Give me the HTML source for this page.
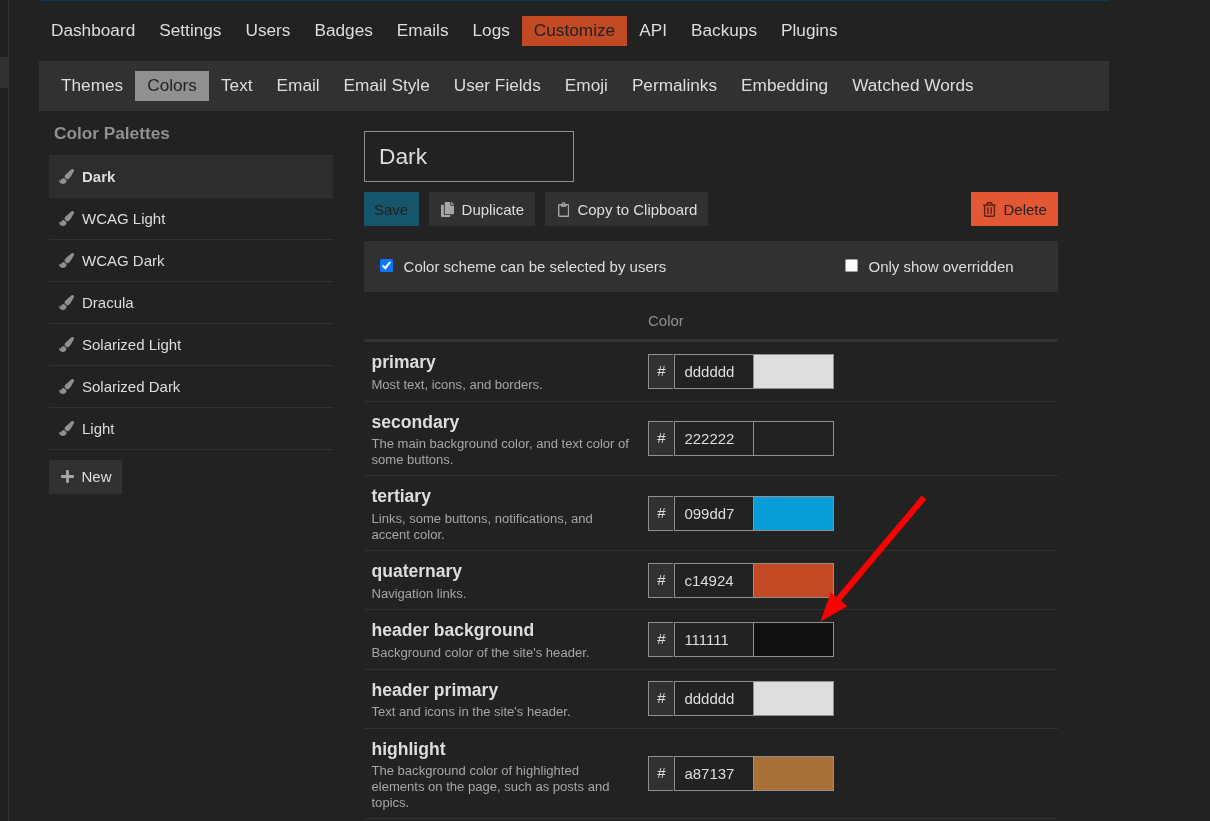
<!DOCTYPE html>
<html><head><meta charset="utf-8">
<style>
*{box-sizing:border-box;margin:0;padding:0}
html,body{width:1210px;height:821px;overflow:hidden;background:#222;color:#ddd;font-family:"Liberation Sans",Arial,sans-serif;font-size:15px}
.abs{position:absolute}
#side{left:0;top:0;width:9px;height:821px;background:#212121;border-right:1px solid #333}
#sideact{left:0;top:57px;width:8px;height:31px;background:#313131}
#topbar{left:39px;top:0;width:1070px;height:1px;background:#043b50}
.nav{position:absolute;display:flex;list-style:none;font-size:17.23px}
.nav li{padding:0 12px;height:30px;line-height:28px;white-space:nowrap}
#nav1{left:39px;top:16px}
#nav1 li.act{background:#c14924;color:#222}
#bar2{left:39px;top:61px;width:1070px;height:50px;background:#313131}
#nav2{left:49px;top:71px}
#nav2 li.act{background:#909090;color:#222}
h3{position:absolute;left:54px;top:123px;font-size:17.23px;color:#909090;font-weight:bold;line-height:20px}
#list{left:49px;top:155px;width:284px;list-style:none}
#list li{height:42px;border-bottom:1px solid #313131;line-height:41px;padding-left:33px;position:relative;font-size:15px}
#list li.act{background:#2d2d2d;font-weight:bold;border-top:1px solid #313131;height:43px}
#list li svg{position:absolute;left:10px;top:12.5px;width:15px;height:15px;fill:#909090}
.btn{position:absolute;height:34px;top:192px;background:#313131;color:#ddd;font-size:15px;line-height:36px;white-space:nowrap}
.btn svg{position:absolute;fill:#a6a6a6}
#name{left:364px;top:131px;width:210px;height:51px;border:1px solid #909090;font-size:22.74px;line-height:49px;padding-left:14px}
#panel{left:364px;top:241px;width:694px;height:51px;background:#313131}
.cb{position:absolute;width:13px;height:13px;border-radius:1.5px}
.lbl{position:absolute;font-size:15px;line-height:18px;white-space:nowrap}
#colh{left:648px;top:312px;color:#909090;font-size:15px;line-height:18px}
#colline{left:364px;top:339px;width:694px;height:3px;background:#313131}
.row{position:absolute;left:364px;width:694px;border-bottom:1px solid #313131}
.row b{position:absolute;left:7.5px;font-size:17.55px;line-height:20px;white-space:nowrap}
.row p{position:absolute;left:7.5px;font-size:13.06px;line-height:16px;color:#a6a6a6;width:261px}
.hex{position:absolute;left:284px;width:186px;height:35px;display:flex}
.hex i{font-style:normal;position:relative;width:26px;border:1px solid #909090;border-right:0;background:#313131;text-align:center;line-height:31px;font-size:15px}
.hex u{text-decoration:none;width:80px;border:1px solid #909090;line-height:33px;padding-left:9.4px;font-size:15px}
.hex i:after{content:"";position:absolute;right:0;top:-1px;bottom:-1px;width:1px;background:#2c2c2c}
.hex s{width:80px;border:1px solid #909090;border-left:0}
#wrap{position:absolute;left:0;top:0;width:1210px;height:821px;will-change:transform}
</style></head><body><div id="wrap">
<div class="abs" id="side"></div><div class="abs" id="sideact"></div>
<div class="abs" id="topbar"></div>
<ul class="nav" id="nav1"><li>Dashboard</li><li>Settings</li><li>Users</li><li>Badges</li><li>Emails</li><li>Logs</li><li class="act">Customize</li><li>API</li><li>Backups</li><li>Plugins</li></ul>
<div class="abs" id="bar2"></div>
<ul class="nav" id="nav2"><li>Themes</li><li class="act">Colors</li><li>Text</li><li>Email</li><li>Email Style</li><li>User Fields</li><li>Emoji</li><li>Permalinks</li><li>Embedding</li><li>Watched Words</li></ul>
<h3>Color Palettes</h3>
<ul class="abs" id="list">
<li class="act"><svg viewBox="0 0 512 512"><use href="#brush"/></svg>Dark</li>
<li><svg viewBox="0 0 512 512"><use href="#brush"/></svg>WCAG Light</li>
<li><svg viewBox="0 0 512 512"><use href="#brush"/></svg>WCAG Dark</li>
<li><svg viewBox="0 0 512 512"><use href="#brush"/></svg>Dracula</li>
<li><svg viewBox="0 0 512 512"><use href="#brush"/></svg>Solarized Light</li>
<li><svg viewBox="0 0 512 512"><use href="#brush"/></svg>Solarized Dark</li>
<li><svg viewBox="0 0 512 512"><use href="#brush"/></svg>Light</li>
</ul>
<svg width="0" height="0" style="position:absolute"><defs>
<path id="brush" d="M167.02 309.34c-40.12 2.58-76.53 17.86-97.19 72.3-2.350 6.210-8 9.980-14.590 9.980-11.110 0-45.460-27.670-55.250-34.350C0 439.620 37.930 512 128 512c75.860 0 128-43.770 128-120.190 0-3.110-.65-6.080-.97-9.130l-88.010-73.340zM457.890 0c-15.160 0-29.370 6.710-40.210 16.450C213.270 199.050 192 203.340 192 257.090c0 13.700 3.250 26.760 8.730 38.700l63.820 53.180c7.210 1.800 14.640 3.030 22.390 3.030 62.110 0 98.110-45.470 211.160-256.460 7.380-14.350 13.900-29.850 13.900-45.990C512 20.640 486 0 457.890 0z"/>
</defs></svg>
<div class="btn" style="left:49px;top:460px;width:73px;padding-left:32.5px;line-height:34px"><svg viewBox="0 0 448 448" style="left:12px;top:10px;width:13px;height:13px"><path d="M416 176H272V32c0-17.670-14.330-32-32-32h-32c-17.670 0-32 14.330-32 32v144H32c-17.670 0-32 14.330-32 32v32c0 17.670 14.330 32 32 32h144v144c0 17.670 14.330 32 32 32h32c17.670 0 32-14.330 32-32V272h144c17.670 0 32-14.330 32-32v-32c0-17.670-14.330-32-32-32z"/></svg>New</div>

<div class="abs" id="name">Dark</div>
<div class="btn" style="left:364px;width:55px;background:#17556b;color:#222;padding-left:10px">Save</div>
<div class="btn" style="left:429px;width:106px;padding-left:32.600px"><svg viewBox="0 0 448 512" style="left:12px;top:10px;width:13px;height:15px"><path d="M320 448v40c0 13-11 24-24 24H24c-13 0-24-11-24-24V120c0-13 11-24 24-24h72v296c0 31 25 56 56 56h168zm0-344V0H152c-13 0-24 11-24 24v368c0 13 11 24 24 24h272c13 0 24-11 24-24V128H344c-13 0-24-11-24-24zm121-31L375 7A24 24 0 0 0 358 0H352v96h96v-6a24 24 0 0 0-7-17z"/></svg>Duplicate</div>
<div class="btn" style="left:545px;width:163px;padding-left:32.400px"><svg viewBox="0 0 384 512" style="left:12.800px;top:10px;width:11.250px;height:15px"><path d="M336 64h-80c0-35-29-64-64-64s-64 29-64 64H48C22 64 0 86 0 112v352c0 26 22 48 48 48h288c26 0 48-22 48-48V112c0-26-22-48-48-48zM192 40c13 0 24 11 24 24s-11 24-24 24-24-11-24-24 11-24 24-24zm144 418c0 3-3 6-6 6H54c-3 0-6-3-6-6V118c0-3 3-6 6-6h42v36c0 7 5 12 12 12h168c7 0 12-5 12-12v-36h42c3 0 6 3 6 6z"/></svg>Copy to Clipboard</div>
<div class="btn" style="left:971px;width:87px;background:#e45735;color:#222;padding-left:32.500px"><svg viewBox="0 0 448 512" style="left:12px;top:10px;width:13px;height:15px;fill:#5a2012"><path d="M268 416h24a12 12 0 0 0 12-12V188a12 12 0 0 0-12-12h-24a12 12 0 0 0-12 12v216a12 12 0 0 0 12 12zM432 80h-82l-34-57A48 48 0 0 0 275 0H173a48 48 0 0 0-41 23L98 80H16A16 16 0 0 0 0 96v16a16 16 0 0 0 16 16h16v336a48 48 0 0 0 48 48h288a48 48 0 0 0 48-48V128h16a16 16 0 0 0 16-16V96a16 16 0 0 0-16-16zM171 51a6 6 0 0 1 5-3h96a6 6 0 0 1 5 3l17 29H154zM368 464H80V128h288zm-212-48h24a12 12 0 0 0 12-12V188a12 12 0 0 0-12-12h-24a12 12 0 0 0-12 12v216a12 12 0 0 0 12 12z"/></svg>Delete</div>

<div class="abs" id="panel"></div>
<div class="cb" style="left:380px;top:259px;background:#0a75ff"><svg viewBox="0 0 13 13" width="13" height="13" style="display:block"><path d="M2.600 6.600L5.200 9.100L10.300 2.800" stroke="#fff" stroke-width="2.100" fill="none"/></svg></div>
<div class="lbl" style="left:403.600px;top:258px">Color scheme can be selected by users</div>
<div class="cb" style="left:845px;top:259px;background:#fff;border:1px solid #a0a0a0"></div>
<div class="lbl" style="left:868.500px;top:258px">Only show overridden</div>

<div class="abs" id="colh">Color</div>
<div class="abs" id="colline"></div>

<div class="row" style="top:343px;height:59px"><b style="top:9px">primary</b><p style="top:34px">Most text, icons, and borders.</p><div class="hex" style="top:11px"><i>#</i><u>dddddd</u><s style="background:#dddddd"></s></div></div>
<div class="row" style="top:402px;height:74px"><b style="top:10px">secondary</b><p style="top:34px">The main background color, and text color of some buttons.</p><div class="hex" style="top:19px"><i>#</i><u>222222</u><s style="background:#222222"></s></div></div>
<div class="row" style="top:476px;height:75px"><b style="top:10px">tertiary</b><p style="top:35px">Links, some buttons, notifications, and accent color.</p><div class="hex" style="top:20px"><i>#</i><u>099dd7</u><s style="background:#099dd7"></s></div></div>
<div class="row" style="top:551px;height:59px"><b style="top:10px">quaternary</b><p style="top:35px">Navigation links.</p><div class="hex" style="top:12px"><i>#</i><u>c14924</u><s style="background:#c14924"></s></div></div>
<div class="row" style="top:610px;height:60px"><b style="top:10px">header background</b><p style="top:35px">Background color of the site's header.</p><div class="hex" style="top:12px"><i>#</i><u>111111</u><s style="background:#111111"></s></div></div>
<div class="row" style="top:670px;height:59px"><b style="top:10px">header primary</b><p style="top:34px">Text and icons in the site's header.</p><div class="hex" style="top:11px"><i>#</i><u>dddddd</u><s style="background:#dddddd"></s></div></div>
<div class="row" style="top:729px;height:90px"><b style="top:10px">highlight</b><p style="top:34px">The background color of highlighted elements on the page, such as posts and topics.</p><div class="hex" style="top:27px"><i>#</i><u>a87137</u><s style="background:#a87137"></s></div></div>

<svg class="abs" style="left:0;top:0" width="1210" height="821"><line x1="924" y1="497.500" x2="836" y2="602" stroke="#f00" stroke-width="6"/><polygon points="820.400,621.600 830.900,592.300 847.300,606.200" fill="#f00"/></svg>
</div></body></html>
